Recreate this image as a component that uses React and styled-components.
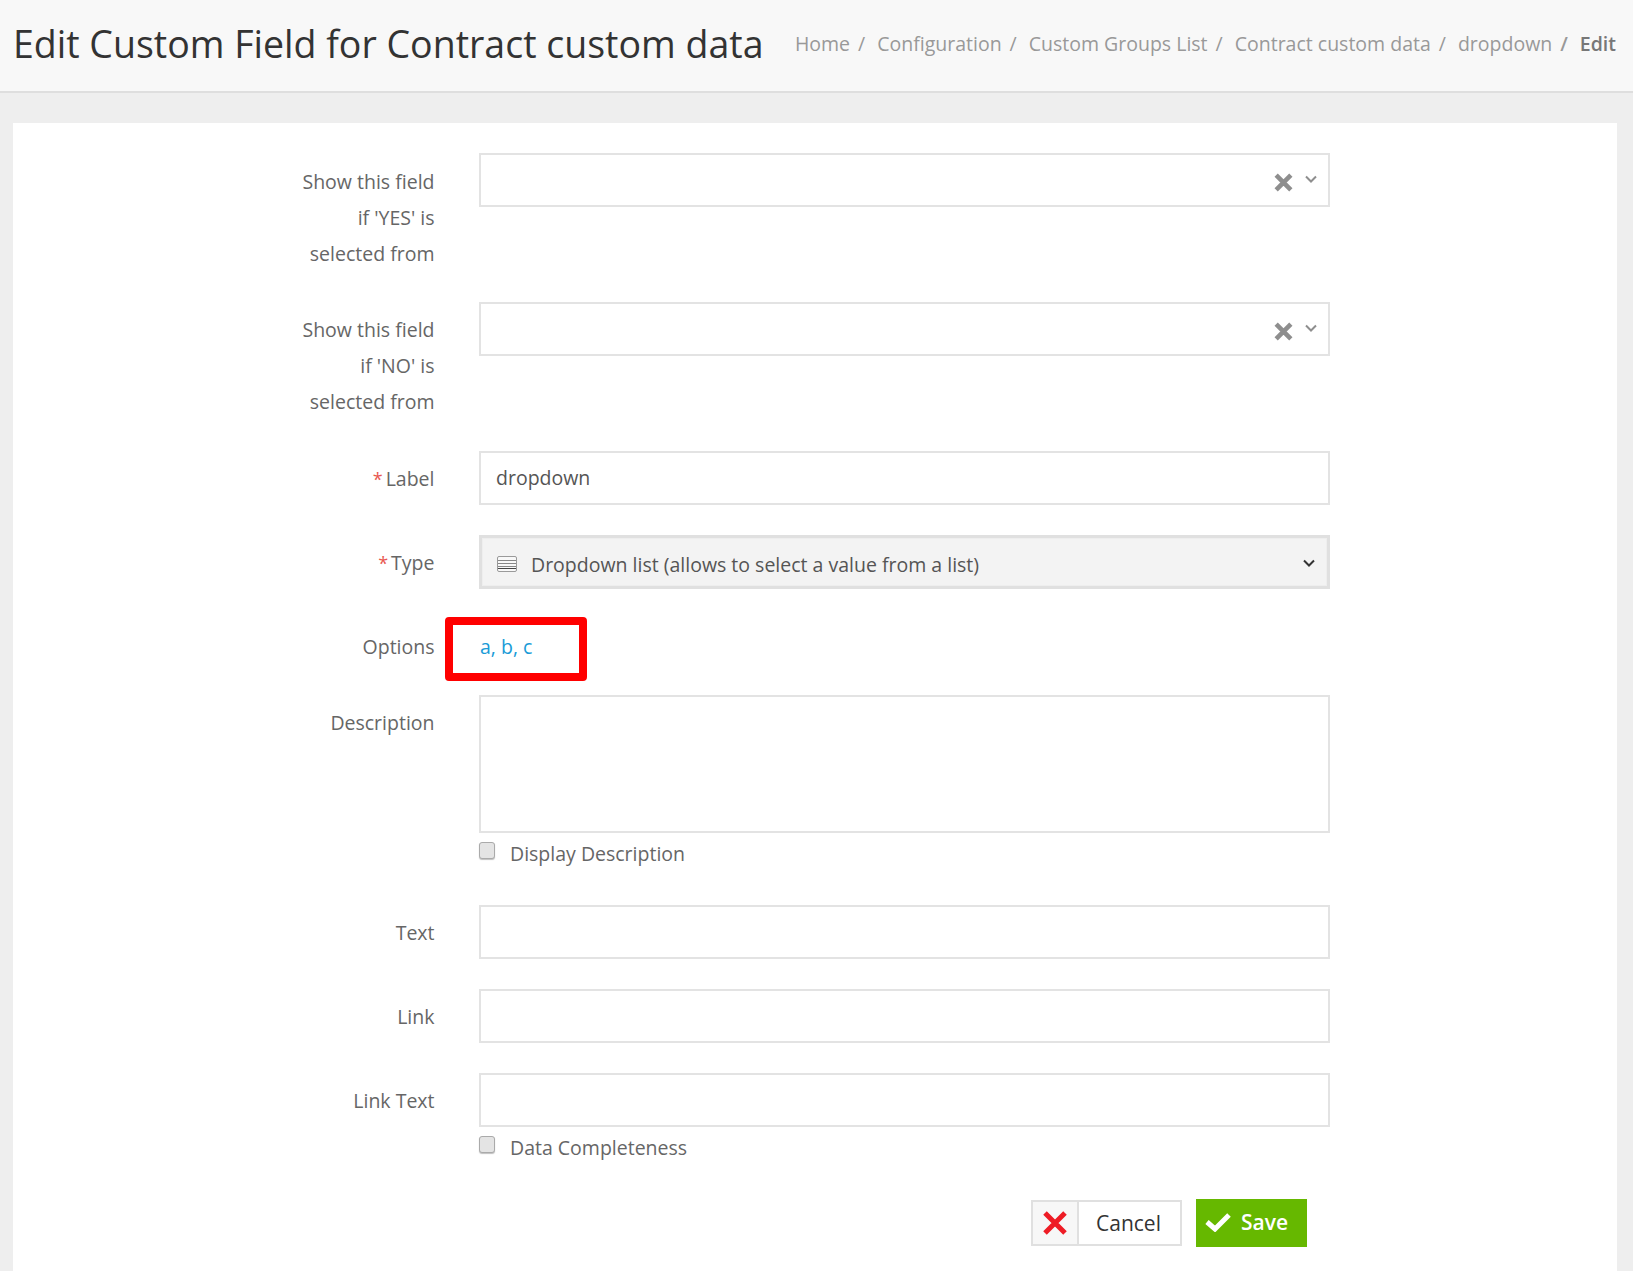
import React from "react";
import styled, { createGlobalStyle } from "styled-components";

const GlobalStyle = createGlobalStyle`
  html, body {
    margin: 0;
    padding: 0;
    background: #eeeeee;
    font-family: "Open Sans", "Liberation Sans", sans-serif;
    color: #666;
  }
  * { box-sizing: border-box; }
`;

const Header = styled.header`
  display: flex;
  justify-content: space-between;
  align-items: center;
  height: 93px;
  padding: 0 17px 5px 13px;
  background: #f8f8f8;
  border-bottom: 2px solid #dedede;
`;

const Title = styled.h1`
  margin: 0;
  font-size: 37.5px;
  font-weight: 400;
  color: #333;
  white-space: nowrap;
`;

const Crumbs = styled.nav`
  display: flex;
  align-items: center;
  font-size: 19.5px;
  color: #999;
  white-space: nowrap;
`;

const Crumb = styled.span`
  color: ${(p) => (p.$active ? "#777" : "#999")};
  font-weight: ${(p) => (p.$active ? 600 : 400)};
`;

const Sep = styled.span`
  margin: 0 12px 0 8px;
  font-weight: ${(p) => (p.$strong ? 600 : 400)};
`;

const Panel = styled.main`
  min-height: calc(100vh - 123px);
  margin: 30px 16px 0 13px;
  padding: 30px 0 10px;
  background: #fff;
`;

const Row = styled.div`
  display: grid;
  grid-template-columns: 421.5px 851px;
  column-gap: 44.5px;
  margin-bottom: ${(p) => p.$gap ?? 30}px;
`;

const Label = styled.label`
  padding-top: ${(p) => p.$top ?? 10}px;
  font-size: 19.5px;
  line-height: 36px;
  text-align: right;
  color: #666;
`;

const Star = styled.span`
  margin-right: 3px;
  font-size: 18px;
  color: #e8574f;
`;

const Control = styled.div`
  position: relative;
  min-width: 0;
`;

const TextInput = styled.input`
  display: block;
  width: 100%;
  height: 54px;
  padding: 0 15px 1px;
  border: 2px solid #e3e3e3;
  background: #fff;
  font: 400 19.5px "Open Sans", sans-serif;
  color: #555;
  outline: none;
`;

const TextArea = styled.textarea`
  display: block;
  width: 100%;
  height: 138px;
  border: 2px solid #e3e3e3;
  background: #fff;
  outline: none;
  resize: none;
`;

const SelectBox = styled.div`
  display: flex;
  align-items: center;
  justify-content: flex-end;
  height: 54px;
  padding: 0 10px 0 0;
  border: 2px solid #e3e3e3;
  background: #fff;
`;

const ClearIcon = styled.svg`
  width: 21px;
  height: 21px;
  margin: 4px 10px 0 0;
`;

const ArrowIcon = styled.svg`
  width: 14px;
  height: 10px;
  margin-top: -2px;
`;

const TypeSelect = styled.div`
  display: flex;
  align-items: center;
  height: 54px;
  padding: 4px 11px 0 15px;
  border: 3px solid #e0e0e0;
  outline: 1px solid #eee;
  outline-offset: -4px;
  background: #f3f3f3;
  font-size: 19.5px;
  color: #555;
`;

const ListIcon = styled.svg`
  width: 20px;
  height: 16px;
  margin-right: 14px;
  flex: none;
`;

const TypeText = styled.span`
  flex: 1;
`;

const OptionsText = styled.a`
  display: block;
  padding: 10px 0 0 1px;
  height: 46px;
  font-size: 19.5px;
  line-height: 36px;
  color: #1a9bd7;
`;

const Callout = styled.div`
  position: absolute;
  left: -34px;
  top: -2px;
  width: 142px;
  height: 64px;
  border: 8px solid #ff0000;
  border-radius: 4px;
  pointer-events: none;
`;

const CheckRow = styled.div`
  display: flex;
  align-items: flex-start;
  height: 37px;
  margin-top: 9px;
`;

const Check = styled.input`
  appearance: none;
  width: 16px;
  height: 17px;
  margin: 0 15px 0 0;
  border: 1px solid #aaa;
  border-radius: 3px;
  background: #e4e4e4;
  box-shadow: 0 1px 1px rgba(0, 0, 0, 0.25);
`;

const CheckLabel = styled.span`
  font-size: 19.5px;
  line-height: 36px;
  margin-top: -6px;
  color: #666;
`;

const Actions = styled.div`
  display: flex;
  align-items: center;
  justify-content: flex-end;
  gap: 14px;
  width: 1294px;
`;

const CancelButton = styled.button`
  display: flex;
  align-items: stretch;
  width: 151px;
  height: 46px;
  padding: 0;
  border: 2px solid #e0e0e0;
  background: #fff;
  font: 400 21px "Open Sans", sans-serif;
  color: #333;
`;

const CancelIcon = styled.span`
  display: flex;
  align-items: center;
  justify-content: center;
  width: 46px;
  background: #f7f7f7;
  border-right: 2px solid #e0e0e0;
`;

const CancelText = styled.span`
  flex: 1;
  padding-right: 2px;
  line-height: 42px;
`;

const SaveButton = styled.button`
  display: flex;
  align-items: center;
  gap: 10px;
  width: 111px;
  height: 48px;
  padding: 0 0 2px 9px;
  border: none;
  background: #66b800;
  font: 600 21px "Open Sans", sans-serif;
  color: #fff;
`;

const crumbs = ["Home", "Configuration", "Custom Groups List", "Contract custom data", "dropdown"];

const Clear = () => (
  <ClearIcon viewBox="0 0 20 20">
    <path d="M3 3l14 14M17 3L3 17" stroke="#8e8e8e" strokeWidth="4.4" />
  </ClearIcon>
);

const Arrow = ({ color = "#8e8e8e" }) => (
  <ArrowIcon viewBox="0 0 14 10">
    <path d="M2 2.5l5 5 5-5" fill="none" stroke={color} strokeWidth="2" />
  </ArrowIcon>
);

const EmptySelect = () => (
  <SelectBox>
    <Clear />
    <Arrow />
  </SelectBox>
);

const Completeness = ({ children }) => (
  <CheckRow>
    <Check type="checkbox" />
    <CheckLabel>{children}</CheckLabel>
  </CheckRow>
);

export default function App() {
  return (
    <>
      <GlobalStyle />
      <Header>
        <Title>Edit Custom Field for Contract custom data</Title>
        <Crumbs>
          {crumbs.map((c) => (
            <React.Fragment key={c}>
              <Crumb>{c}</Crumb>
              <Sep $strong={c === "dropdown"}>/</Sep>
            </React.Fragment>
          ))}
          <Crumb $active>Edit</Crumb>
        </Crumbs>
      </Header>
      <Panel>
        <Row>
          <Label $top={11}>
            Show this field
            <br />
            if 'YES' is
            <br />
            selected from
          </Label>
          <Control>
            <EmptySelect />
          </Control>
        </Row>
        <Row $gap={31}>
          <Label>
            Show this field
            <br />
            if 'NO' is
            <br />
            selected from
          </Label>
          <Control>
            <EmptySelect />
          </Control>
        </Row>
        <Row>
          <Label>
            <Star>*</Star>Label
          </Label>
          <Control>
            <TextInput defaultValue="dropdown" />
          </Control>
        </Row>
        <Row>
          <Label>
            <Star>*</Star>Type
          </Label>
          <Control>
            <TypeSelect>
              <ListIcon viewBox="0 0 20 16">
                <rect x="0.5" y="0.5" width="19" height="15" rx="1.5" fill="#f8f8f8" stroke="#9a9a9a" />
                <path d="M1 4.5h18M1 7.5h18M1 10.5h18" stroke="#888" />
                <path d="M1 12.5h18" stroke="#444" />
              </ListIcon>
              <TypeText>Dropdown list (allows to select a value from a list)</TypeText>
              <Arrow color="#333" />
            </TypeSelect>
          </Control>
        </Row>
        <Row>
          <Label>Options</Label>
          <Control>
            <OptionsText>a, b, c</OptionsText>
            <Callout />
          </Control>
        </Row>
        <Row $gap={26}>
          <Label>Description</Label>
          <Control>
            <TextArea />
            <Completeness>Display Description</Completeness>
          </Control>
        </Row>
        <Row>
          <Label>Text</Label>
          <Control>
            <TextInput />
          </Control>
        </Row>
        <Row>
          <Label>Link</Label>
          <Control>
            <TextInput />
          </Control>
        </Row>
        <Row $gap={26}>
          <Label>Link Text</Label>
          <Control>
            <TextInput />
            <Completeness>Data Completeness</Completeness>
          </Control>
        </Row>
        <Actions>
          <CancelButton>
            <CancelIcon>
              <svg width="26" height="26" viewBox="0 0 26 26">
                <path d="M3 3l20 20M23 3L3 23" stroke="#ee1c25" strokeWidth="5" />
              </svg>
            </CancelIcon>
            <CancelText>Cancel</CancelText>
          </CancelButton>
          <SaveButton>
            <svg width="26" height="20" viewBox="0 0 26 20">
              <path d="M2 10l8 7L24 3" fill="none" stroke="#fff" strokeWidth="5" />
            </svg>
            Save
          </SaveButton>
        </Actions>
      </Panel>
    </>
  );
}
